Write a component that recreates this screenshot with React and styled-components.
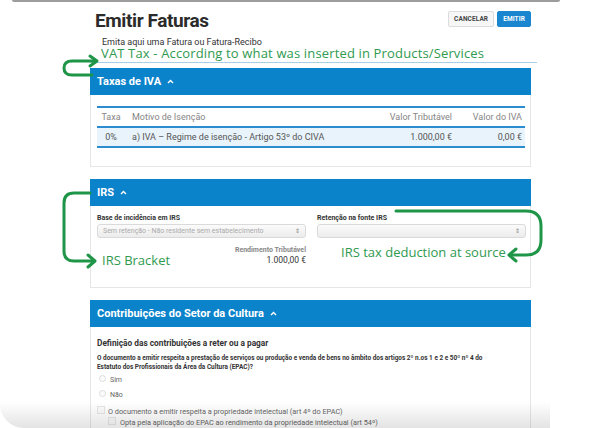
import React from "react";
import styled, { createGlobalStyle } from "styled-components";

const Global = createGlobalStyle`
  *, *::before, *::after { box-sizing: border-box; }
  html, body {
    margin: 0;
    padding: 0;
    background: #ffffff;
    font-family: Roboto, "Liberation Sans", Arial, sans-serif;
  }
`;

const Page = styled.div`
  position: relative;
  width: 600px;
  height: 428px;
  overflow: hidden;
  background: #fff;
`;

const TopEdge = styled.div`
  height: 2px;
  margin: 0 40px 0 12px;
  background: #9c9c9c;
  border-radius: 0 0 2px 2px;
`;

const Content = styled.div`
  width: 441px;
  margin-left: 90px;
`;

const HeaderRow = styled.div`
  display: flex;
  justify-content: space-between;
  align-items: flex-start;
  padding: 8px 0 0 5px;
`;

const Title = styled.h1`
  margin: 0;
  font-size: 19px;
  font-weight: 700;
  letter-spacing: -0.4px;
  color: #2b2b2b;
  line-height: 22px;
`;

const Buttons = styled.div`
  display: flex;
  gap: 3px;
  margin-top: 1px;
`;

const Button = styled.button`
  height: 16px;
  padding: 0 5px;
  font-family: Roboto, "Liberation Sans", Arial, sans-serif;
  font-size: 6.5px;
  font-weight: 700;
  letter-spacing: 0.1px;
  border-radius: 2px;
  border: 1px solid ${(p) => (p.$primary ? "#1a86d0" : "#dcdcdc")};
  background: ${(p) => (p.$primary ? "#1a86d0" : "#f7f7f7")};
  color: ${(p) => (p.$primary ? "#fff" : "#444")};
`;

const Subtitle = styled.div`
  margin: 6px 0 0 12px;
  font-size: 9px;
  color: #333;
  line-height: 9px;
`;

const Note = styled.div`
  font-family: "Open Sans", "Liberation Sans", sans-serif;
  font-size: 13px;
  color: #2f9a50;
  line-height: ${(p) => p.$lh || 13}px;
  letter-spacing: ${(p) => p.$ls || 0}px;
  white-space: nowrap;
  margin-top: ${(p) => p.$top || 0}px;
  margin-left: ${(p) => p.$left || 0}px;
  margin-bottom: ${(p) => p.$bottom || 0}px;
`;

const Divider = styled.div`
  height: 1px;
  width: 447px;
  background: #a9cfe6;
  margin-top: 4px;
`;

const Section = styled.section`
  margin-top: ${(p) => p.$top}px;
  border: 1px solid #e6e6e6;
  border-top: none;
  background: #fff;
`;

const SectionHead = styled.div`
  height: 27px;
  margin: 0 -1px;
  background: #0b83cb;
  display: flex;
  align-items: center;
  padding-left: 7px;
  gap: 6px;
  color: #fff;
  font-size: 11px;
  font-weight: 700;
`;

const Chevron = () => (
  <svg width="7" height="5" viewBox="0 0 7 5">
    <path d="M1 4 L3.5 1.5 L6 4" fill="none" stroke="#fff" strokeWidth="1.4" />
  </svg>
);

const SectionBody = styled.div`
  padding: ${(p) => p.$pad};
  height: ${(p) => (p.$h ? `${p.$h}px` : "auto")};
`;

const Table = styled.div`
  border-top: 2px solid #2b8ccf;
`;

const Row = styled.div`
  display: grid;
  grid-template-columns: 28px 1fr 100px 70px;
  align-items: center;
  height: 20px;
  font-size: 9px;
  color: ${(p) => (p.$head ? "#858585" : "#555")};
  background: ${(p) => (p.$hl ? "#e8f3fb" : "transparent")};
  border-bottom: 2px solid #2b8ccf;
  padding-right: 3px;
`;

const Cell = styled.div`
  text-align: ${(p) => p.$align || "left"};
  padding-left: ${(p) => p.$pl || 0}px;
  white-space: nowrap;
`;

const FieldGrid = styled.div`
  display: grid;
  grid-template-columns: 209px 209px;
  column-gap: 11px;
`;

const Field = styled.div`
  display: flex;
  flex-direction: column;
`;

const Label = styled.div`
  font-size: 7px;
  font-weight: 700;
  color: #333;
  line-height: 9px;
  margin-bottom: 1px;
`;

const Select = styled.div`
  height: 14px;
  border: 1px solid #dadada;
  border-radius: 3px;
  background: linear-gradient(#fbfbfb, #ececec);
  display: flex;
  align-items: center;
  justify-content: space-between;
  padding: 0 5px;
  font-size: 7px;
  color: #aaa;
`;

const UpDown = styled.span`
  font-size: 6px;
  color: #888;
  line-height: 6px;
`;

const FieldRow = styled.div`
  display: grid;
  grid-template-columns: 209px 209px;
  column-gap: 11px;
  align-items: end;
  margin-top: 8px;
`;

const Income = styled.div`
  display: grid;
  grid-template-columns: auto 1fr;
  align-items: end;
`;

const Amount = styled.div`
  display: flex;
  flex-direction: column;
  align-items: flex-end;
`;

const AmountLabel = styled.div`
  font-size: 7px;
  font-weight: 700;
  color: #888;
  line-height: 9px;
`;

const AmountValue = styled.div`
  font-size: 8.5px;
  color: #333;
  line-height: 11px;
`;

const Heading = styled.div`
  font-size: 8.3px;
  font-weight: 700;
  color: #333;
  line-height: 10px;
`;

const Question = styled.div`
  margin-top: 6px;
  font-size: 6.45px;
  font-weight: 700;
  color: #333;
  line-height: 9px;
`;

const Option = styled.div`
  display: flex;
  align-items: center;
  gap: ${(p) => p.$gap || 4}px;
  margin-left: ${(p) => p.$indent}px;
  margin-top: ${(p) => p.$top}px;
  font-size: ${(p) => p.$size || 7}px;
  color: #666;
  line-height: 10px;
  white-space: nowrap;
`;

const Radio = styled.span`
  width: 7px;
  height: 7px;
  border-radius: 50%;
  border: 1px solid #dcdcdc;
  background: #fbfbfb;
  margin-top: -4px;
`;

const Box = styled.span`
  width: 8px;
  height: 8px;
  border: 1px solid #e6e6e6;
  background: #fbfbfb;
  margin-top: -4px;
`;

const Arrows = styled.svg`
  position: absolute;
  left: 0;
  top: 0;
  pointer-events: none;
`;

const Shade = styled.div`
  position: absolute;
  left: 0;
  right: 50px;
  bottom: 0;
  height: 26px;
  border-bottom-left-radius: 24px;
  background: linear-gradient(rgba(0, 0, 0, 0), rgba(0, 0, 0, 0.11));
  pointer-events: none;
`;

export default function App() {
  return (
    <Page>
      <Global />
      <TopEdge />
      <Content>
        <HeaderRow>
          <Title>Emitir Faturas</Title>
          <Buttons>
            <Button>CANCELAR</Button>
            <Button $primary>EMITIR</Button>
          </Buttons>
        </HeaderRow>
        <Subtitle>Emita aqui uma Fatura ou Fatura-Recibo</Subtitle>
        <Note $top={2} $left={11} $lh={9} $ls={0.15}>
          VAT Tax -  According to what was inserted in Products/Services
        </Note>
        <Divider />

        <Section $top={5}>
          <SectionHead>
            Taxas de IVA <Chevron />
          </SectionHead>
          <SectionBody $pad="11px 5px 0 6px" $h={71}>
            <Table>
              <Row $head>
                <Cell $align="center">Taxa</Cell>
                <Cell $pl={7}>Motivo de Isenção</Cell>
                <Cell $align="right">Valor Tributável</Cell>
                <Cell $align="right">Valor do IVA</Cell>
              </Row>
              <Row $hl>
                <Cell $align="center">0%</Cell>
                <Cell $pl={7}>a) IVA – Regime de isenção - Artigo 53º do CIVA</Cell>
                <Cell $align="right">1.000,00 €</Cell>
                <Cell $align="right">0,00 €</Cell>
              </Row>
            </Table>
          </SectionBody>
        </Section>

        <Section $top={12}>
          <SectionHead>
            IRS <Chevron />
          </SectionHead>
          <SectionBody $pad="8px 6px 0 6px" $h={81}>
            <FieldGrid>
              <Field>
                <Label>Base de incidência em IRS</Label>
                <Select>
                  Sem retenção - Não residente sem estabelecimento
                  <UpDown>⇕</UpDown>
                </Select>
              </Field>
              <Field>
                <Label>Retenção na fonte IRS</Label>
                <Select>
                  <span />
                  <UpDown>⇕</UpDown>
                </Select>
              </Field>
            </FieldGrid>
            <FieldRow>
              <Income>
                <Note $left={5} $bottom={-1}>IRS Bracket</Note>
                <Amount>
                  <AmountLabel>Rendimento Tributável</AmountLabel>
                  <AmountValue>1.000,00 €</AmountValue>
                </Amount>
              </Income>
              <Note $left={24} $bottom={7}>
                IRS tax deduction at source
              </Note>
            </FieldRow>
          </SectionBody>
        </Section>

        <Section $top={12}>
          <SectionHead>
            Contribuições do Setor da Cultura <Chevron />
          </SectionHead>
          <SectionBody $pad="11px 6px 0 6px" $h={110}>
            <Heading>Definição das contribuições a reter ou a pagar</Heading>
            <Question>
              O documento a emitir respeita a prestação de serviços ou produção e venda de bens no âmbito dos artigos 2º n.os 1 e 2 e 50º nº 4 do
              <br />
              Estatuto dos Profissionais da Área da Cultura (EPAC)?
            </Question>
            <Option $top={3} $indent={2}>
              <Radio />
              Sim
            </Option>
            <Option $top={5} $indent={2}>
              <Radio />
              Não
            </Option>
            <Option $top={7} $size={7.3} $indent={0} $gap={3}>
              <Box />
              O documento a emitir respeita a propriedade intelectual (art 4º do EPAC)
            </Option>
            <Option $top={1} $size={7.3} $indent={11} $gap={4}>
              <Box />
              Opta pela aplicação do EPAC ao rendimento da propriedade intelectual (art 54º)
            </Option>
          </SectionBody>
        </Section>
      </Content>

      <Arrows width="600" height="428" viewBox="0 0 600 428">
        <g fill="none" stroke="#1f9548" strokeWidth="3" strokeLinecap="round" strokeLinejoin="round">
          <path d="M92 75 H72 Q64 75 64 68 Q64 61 72 61 H96" />
          <path d="M90 56 L97 61 L90 66" />
          <path d="M90 193 H74 Q64 193 64 203 V251 Q64 261 74 261 H94" />
          <path d="M88 255 L95 261 L88 267" />
          <path d="M396 211 H526 Q541 211 541 226 V240 Q541 255 526 255 H510" />
          <path d="M516 249 L509 255 L516 261" />
        </g>
      </Arrows>
      <Shade />
    </Page>
  );
}
